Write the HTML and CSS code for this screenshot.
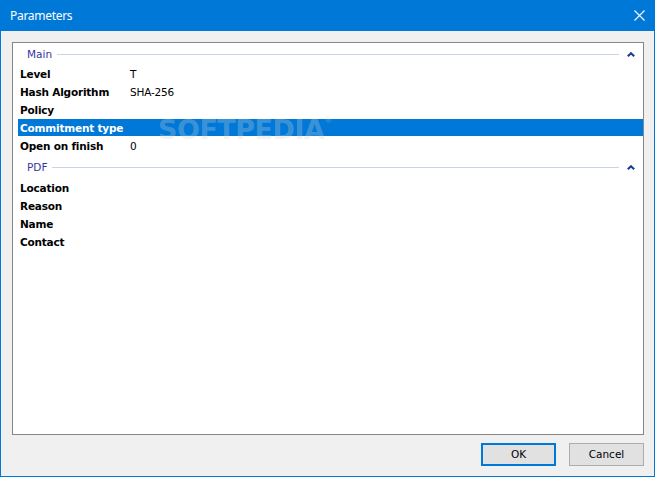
FILE: index.html
```html
<!DOCTYPE html>
<html>
<head>
<meta charset="utf-8">
<link rel="stylesheet" href="styles.css">
</head>
<body>
<div class="window">
  <div class="titlebar">
    <span class="title">Parameters</span>
    <svg class="close" width="11" height="11" viewBox="0 0 11 11"><path d="M0.5 0.5 L10.5 10.5 M10.5 0.5 L0.5 10.5" stroke="#fff" stroke-width="1.1" fill="none"/></svg>
  </div>
  <div class="content">
    <div class="panel">
      <div class="section">
        <div class="sec-head">
          <span class="sec-title">Main</span>
          <span class="sec-line"></span>
          <svg class="chev" width="8" height="5" viewBox="0 0 8 5"><path d="M0.8 4.3 L4 1.2 L7.2 4.3" stroke="#1a3a94" stroke-width="2" fill="none"/></svg>
        </div>
        <div class="row"><span class="label">Level</span><span class="value">T</span></div>
        <div class="row"><span class="label">Hash Algorithm</span><span class="value">SHA-256</span></div>
        <div class="row"><span class="label">Policy</span><span class="value"></span></div>
        <div class="row selected"><span class="label">Commitment type</span><span class="value"></span></div>
        <div class="row"><span class="label">Open on finish</span><span class="value">0</span></div>
      </div>
      <div class="section">
        <div class="sec-head">
          <span class="sec-title">PDF</span>
          <span class="sec-line"></span>
          <svg class="chev" width="8" height="5" viewBox="0 0 8 5"><path d="M0.8 4.3 L4 1.2 L7.2 4.3" stroke="#1a3a94" stroke-width="2" fill="none"/></svg>
        </div>
        <div class="row"><span class="label">Location</span><span class="value"></span></div>
        <div class="row"><span class="label">Reason</span><span class="value"></span></div>
        <div class="row"><span class="label">Name</span><span class="value"></span></div>
        <div class="row"><span class="label">Contact</span><span class="value"></span></div>
      </div>
      <div class="watermark">SOFTPEDIA<sup>®</sup></div>
    </div>
    <div class="buttons">
      <button class="btn default">OK</button>
      <button class="btn">Cancel</button>
    </div>
  </div>
</div>
</body>
</html>
```

FILE: styles.css
```css
html, body {
  margin: 0;
  padding: 0;
  background: #f0f0f0;
}
.window {
  width: 655px;
  height: 477px;
  box-sizing: border-box;
  border: 1px solid #0078d7;
  border-top: none;
  display: flex;
  flex-direction: column;
  font-family: "DejaVu Sans", sans-serif;
  font-size: 10.5px;
  color: #000;
}
.titlebar {
  height: 31px;
  flex: none;
  background: #0078d7;
  margin: 0 -1px;
  display: flex;
  align-items: center;
  justify-content: space-between;
  padding: 0 10px 0 10px;
}
.title {
  font-family: "Noto Sans", sans-serif;
  font-size: 12px;
  letter-spacing: -0.3px;
  color: #fff;
}
.close {
  display: block;
}
.content {
  flex: 1;
  display: flex;
  flex-direction: column;
  padding: 11px 10px 10px 11px;
  background: #f0f0f0;
}
.panel {
  flex: 1;
  border: 1px solid #828790;
  background: #fff;
  position: relative;
  overflow: hidden;
}
.section + .section {
  margin-top: 2px;
}
.section + .section .sec-head {
  margin-bottom: 1px;
}
.sec-head {
  height: 22px;
  display: flex;
  align-items: center;
  padding: 0 8px 0 14px;
}
.sec-title {
  color: #36349e;
  line-height: 22px;
}
.sec-line {
  flex: 1;
  height: 1px;
  background: #c8d3e4;
  margin: 0 8px 0 5px;
}
.chev {
  display: block;
}
.row {
  height: 17px;
  box-sizing: border-box;
  padding-top: 1px;
  margin: 0 0 1px 5px;
  display: flex;
  align-items: center;
  line-height: 16px;
}
.label {
  width: 110px;
  padding-left: 2px;
  font-weight: bold;
  letter-spacing: -0.2px;
  flex: none;
  white-space: nowrap;
}
.value {
  flex: 1;
  letter-spacing: -0.2px;
}
.row.selected {
  background: #0078d7;
  color: #fff;
}
.watermark {
  position: absolute;
  left: 145px;
  top: 71px;
  font-family: "DejaVu Sans", sans-serif;
  font-weight: bold;
  font-size: 27px;
  letter-spacing: -0.5px;
  color: rgba(205, 210, 218, 0.3);
  pointer-events: none;
}
.watermark sup {
  font-size: 8px;
  vertical-align: top;
  position: relative;
  top: 2px;
}
.buttons {
  flex: none;
  display: flex;
  justify-content: flex-end;
  gap: 13px;
  margin-top: 8px;
}
.btn {
  width: 75px;
  height: 23px;
  box-sizing: border-box;
  border: 1px solid #adadad;
  background: #e1e1e1;
  font-family: "DejaVu Sans", sans-serif;
  font-size: 10.5px;
  color: #000;
  padding: 0 0 2px 0;
  margin: 0;
}
.btn.default {
  border: 2px solid #0078d7;
}
```
